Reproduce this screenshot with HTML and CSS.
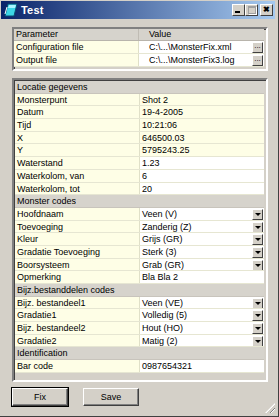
FILE: index.html
```html
<!DOCTYPE html>
<html lang="en">
<head>
  <meta charset="UTF-8">
  <title>Test</title>
  <link rel="stylesheet" href="styles.css">
</head>
<body>
  <div class="window">
    <div class="titlebar">
      <svg class="app-icon" width="14" height="14" viewBox="0 0 14 14">
        <polygon points="4,1 13,1 10,13 1,13" fill="#3cd6e6" stroke="#0a4a70" stroke-width="1"/>
        <polygon points="5,2 12,2 11,5 4,5" fill="#a8f4ff"/>
        <line x1="3" y1="4" x2="1" y2="11" stroke="#fff" stroke-width="1"/>
      </svg>
      <span class="title">Test</span>
      <div class="caption-btns">
        <span class="cap-btn"><i class="min-glyph"></i></span>
        <span class="cap-btn disabled"><i class="max-glyph"></i></span>
        <span class="cap-btn close">&#x2716;</span>
      </div>
    </div>

    <div class="client">
      <div class="grid grid-params">
        <div class="row head">
          <div class="cell label">Parameter</div>
          <div class="cell value">Value</div>
        </div>
        <div class="row">
          <div class="cell label">Configuration file</div>
          <div class="cell value white file">C:\...\MonsterFix.xml<span class="dots">...</span></div>
        </div>
        <div class="row">
          <div class="cell label">Output file</div>
          <div class="cell value white file">C:\...\MonsterFix3.log<span class="dots">...</span></div>
        </div>
      </div>

      <div class="grid grid-props">
        <div class="row cat"><div class="cell">Locatie gegevens</div></div>
        <div class="row"><div class="cell label">Monsterpunt</div><div class="cell value">Shot 2</div></div>
        <div class="row"><div class="cell label">Datum</div><div class="cell value">19-4-2005</div></div>
        <div class="row"><div class="cell label">Tijd</div><div class="cell value">10:21:06</div></div>
        <div class="row"><div class="cell label">X</div><div class="cell value">646500.03</div></div>
        <div class="row"><div class="cell label">Y</div><div class="cell value">5795243.25</div></div>
        <div class="row"><div class="cell label">Waterstand</div><div class="cell value white">1.23</div></div>
        <div class="row"><div class="cell label">Waterkolom, van</div><div class="cell value white">6</div></div>
        <div class="row"><div class="cell label">Waterkolom, tot</div><div class="cell value white">20</div></div>
        <div class="row cat"><div class="cell">Monster codes</div></div>
        <div class="row"><div class="cell label">Hoofdnaam</div><div class="cell value white combo">Veen (V)<span class="drop"></span></div></div>
        <div class="row"><div class="cell label">Toevoeging</div><div class="cell value white combo">Zanderig (Z)<span class="drop"></span></div></div>
        <div class="row"><div class="cell label">Kleur</div><div class="cell value white combo">Grijs (GR)<span class="drop"></span></div></div>
        <div class="row"><div class="cell label">Gradatie Toevoeging</div><div class="cell value white combo">Sterk (3)<span class="drop"></span></div></div>
        <div class="row"><div class="cell label">Boorsysteem</div><div class="cell value white combo">Grab (GR)<span class="drop"></span></div></div>
        <div class="row"><div class="cell label">Opmerking</div><div class="cell value white">Bla Bla 2</div></div>
        <div class="row cat"><div class="cell">Bijz.bestanddelen codes</div></div>
        <div class="row"><div class="cell label">Bijz. bestandeel1</div><div class="cell value white combo">Veen (VE)<span class="drop"></span></div></div>
        <div class="row"><div class="cell label">Gradatie1</div><div class="cell value white combo">Volledig (5)<span class="drop"></span></div></div>
        <div class="row"><div class="cell label">Bijz. bestandeel2</div><div class="cell value white combo">Hout (HO)<span class="drop"></span></div></div>
        <div class="row"><div class="cell label">Gradatie2</div><div class="cell value white combo">Matig (2)<span class="drop"></span></div></div>
        <div class="row cat"><div class="cell">Identification</div></div>
        <div class="row"><div class="cell label">Bar code</div><div class="cell value white">0987654321</div></div>
      </div>

      <div class="buttons">
        <button class="btn default">Fix</button>
        <button class="btn">Save</button>
      </div>
    </div>
    <div class="grip"></div>
  </div>
</body>
</html>
```

FILE: styles.css
```css
html, body {
  margin: 0;
  padding: 0;
}
body {
  width: 279px;
  height: 417px;
  background: #d4d0c8;
  font-family: "Liberation Sans", Arial, sans-serif;
  font-size: 9px;
  color: #000;
  overflow: hidden;
}
.window {
  position: relative;
  width: 279px;
  height: 417px;
  box-sizing: border-box;
  padding: 1px 3px 3px 1px;
  border-right: 1px solid #404040;
  border-bottom: 1px solid #404040;
}
.titlebar {
  height: 18px;
  display: flex;
  align-items: center;
  background: linear-gradient(to right, #0a246a, #a6caf0);
  padding: 0 2px 0 3px;
}
.app-icon {
  flex: none;
}
.title {
  color: #fff;
  font-weight: bold;
  font-size: 11px;
  margin-left: 3px;
  letter-spacing: 0.2px;
}
.caption-btns {
  margin-left: auto;
  display: flex;
  align-items: center;
}
.cap-btn {
  width: 11px;
  height: 10px;
  background: #d4d0c8;
  border: 1px solid;
  border-color: #fff #404040 #404040 #fff;
  position: relative;
  display: flex;
  align-items: center;
  justify-content: center;
  font-size: 8px;
  line-height: 1;
}
.cap-btn.close {
  margin-left: 2px;
  font-weight: bold;
}
.min-glyph {
  position: absolute;
  left: 2px;
  bottom: 2px;
  width: 5px;
  height: 2px;
  background: #000;
}
.max-glyph {
  width: 6px;
  height: 5px;
  border: 1px solid #a0a0a0;
  border-top-width: 2px;
  box-shadow: 1px 1px 0 #fff;
}
.client {
  padding: 8px 7px 0 11px;
}
.grid {
  width: 256px;
  box-sizing: border-box;
  border: 2px solid;
  border-color: #808080 #fff #fff #808080;
  box-shadow: inset 1px 1px 0 #404040;
  background: #d4d0c8;
}
.grid-params {
  height: 44px;
  padding: 0 2px 0 0;
}
.grid-props {
  margin-top: 7px;
  height: 304px;
  padding: 1px 2px 0 1px;
}
.row {
  display: flex;
  height: 13px;
  box-sizing: border-box;
  border-bottom: 1px solid #e6e6d2;
}
.grid-props .row {
  height: 12.7px;
}
.cell {
  box-sizing: border-box;
  padding-left: 2px;
  line-height: 12px;
  white-space: nowrap;
  overflow: hidden;
}
.label {
  width: 125px;
  flex: none;
  background: #fefee6;
  border-right: 1px solid #e0e0c8;
  padding-left: 2px;
}
.value {
  flex: 1;
  background: #fefee6;
  position: relative;
}
.value.white {
  background: #fff;
}
.grid-params .value {
  padding-left: 10px;
}
.head {
  height: 12px;
  border-bottom: 1px solid #b8b4ac;
}
.head .cell {
  background: #d6d3cc;
  line-height: 11px;
}
.head .label {
  border-right: 1px solid #c0bcb4;
}
.cat {
  background: #d6d3cc;
  border-bottom: 1px solid #c8c4bc;
}
.cat .cell {
  padding-left: 2px;
}
.dots {
  position: absolute;
  right: 1px;
  top: 1px;
  width: 9px;
  height: 9px;
  background: #d4d0c8;
  border: 1px solid;
  border-color: #fff #404040 #404040 #fff;
  font-size: 8px;
  line-height: 6px;
  text-align: center;
}
.drop {
  position: absolute;
  right: 1px;
  top: 1px;
  width: 9px;
  height: 9px;
  background: #d4d0c8;
  border: 1px solid;
  border-color: #fff #404040 #404040 #fff;
}
.drop::after {
  content: "";
  position: absolute;
  left: 2px;
  top: 3px;
  border-left: 3px solid transparent;
  border-right: 3px solid transparent;
  border-top: 3px solid #000;
}
.buttons {
  display: flex;
  gap: 15px;
  margin-top: 6px;
}
.btn {
  width: 56px;
  height: 18px;
  padding: 0;
  background: #d4d0c8;
  font-family: "Liberation Sans", Arial, sans-serif;
  font-size: 9px;
  color: #000;
  border: 1px solid;
  border-color: #fff #404040 #404040 #fff;
  box-shadow: inset -1px -1px 0 #808080;
}
.btn.default {
  outline: 1px solid #000;
  outline-offset: 0;
  border-color: #fff #404040 #404040 #fff;
}
.grip {
  position: absolute;
  right: 3px;
  bottom: 3px;
  width: 10px;
  height: 10px;
  background: repeating-linear-gradient(135deg, transparent 0 2px, #808080 2px 3px, #fff 3px 4px);
  clip-path: polygon(100% 0, 100% 100%, 0 100%);
}
```
